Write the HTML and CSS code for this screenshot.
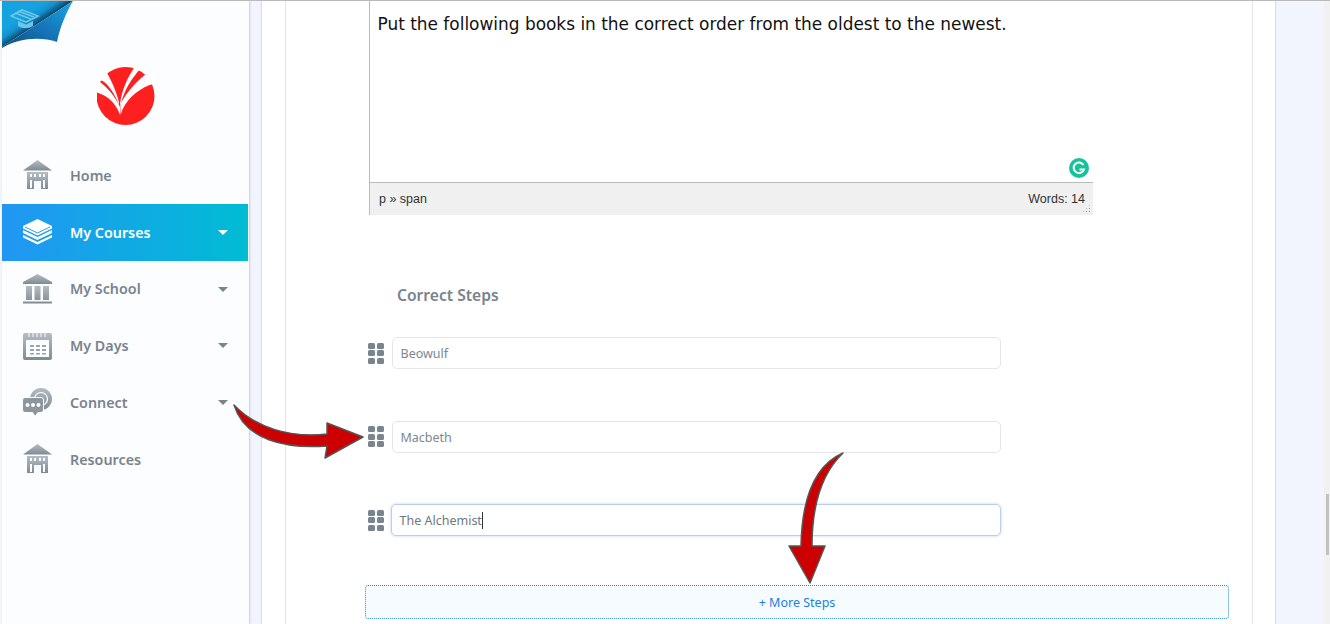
FILE: index.html
```html
<!DOCTYPE html>
<html lang="en">
<head>
    <meta charset="UTF-8">
    <title>My Courses</title>
    <link rel="stylesheet" href="styles.css">
</head>
<body>
    <svg width="0" height="0" class="defs">
        <defs>
            <linearGradient id="grey" x1="0" y1="0" x2="0" y2="1">
                <stop offset="0" stop-color="#b4bdc4"/>
                <stop offset="1" stop-color="#808a93"/>
            </linearGradient>
            <linearGradient id="curl" gradientUnits="userSpaceOnUse" x1="27" y1="11" x2="35" y2="23">
                <stop offset="0" stop-color="#14a3de"/>
                <stop offset="0.5" stop-color="#1590cc"/>
                <stop offset="1" stop-color="#0b4a70"/>
            </linearGradient>
            <linearGradient id="fold" x1="0" y1="1" x2="1" y2="0">
                <stop offset="0" stop-color="#0b4f78"/>
                <stop offset="0.45" stop-color="#1570b5"/>
                <stop offset="1" stop-color="#17a6e0"/>
            </linearGradient>
        </defs>
    </svg>

    <aside class="sidebar">
        <svg class="curl" width="72" height="48" viewBox="0 0 72 48">
            <path d="M0 0H71L0 46Z" fill="url(#curl)"/>
            <path d="M0 46L71 0C64 12 58 26 55 41C40 36 18 36 0 47Z" fill="url(#fold)"/>
            <g fill="none" stroke="#6cc6ea" stroke-width="1.600">
                <path d="M9 15L20 9L36 15L24 21Z"/>
                <path d="M13 12L29 18M16 10L32 16"/>
            </g>
            <path d="M16 20L24 23.500L31 20V25C26 28 21 28 16 25Z" fill="#6cc6ea"/>
        </svg>
        <div class="logo">
            <svg width="58" height="60" viewBox="0 0 58 60">
                <circle cx="28.500" cy="30" r="29" fill="#fe1f1f"/>
                <path d="M-2 8L9.300 5.700C14 14 19 24 22 36V39C18 28 12 19 5.300 14.700L-2 14Z" fill="#fff"/>
                <path d="M-2 17L2.700 15.700C10 21 18 30 23 41V49C19 37 10 29 -2 26Z" fill="#fff"/>
                <path d="M37.700 0L44 2C35 12 27 24 24 38H23C25 24 30 12 37.700 1Z" fill="#fff"/>
                <path d="M47.700 9L60 6V17L52.700 19C40 24 28 34 23.500 49L23.300 38C30 26 38 17 47.700 9Z" fill="#fff"/>
            </svg>
        </div>
        <nav class="menu">
            <a class="menu-item">
                <svg class="menu-icon" width="29" height="30" viewBox="0 0 29 30">
                    <path d="M14.500 0L29 10.500H0Z" fill="url(#grey)"/>
                    <path fill-rule="evenodd" d="M4 12H25V29H18V21H11V29H4ZM7 14V17H9V14ZM11 14V17H13V14ZM16 14V17H18V14ZM20 14V17H22V14ZM7 20V28H9V20ZM20 20V28H22V20Z" fill="url(#grey)"/>
                </svg>
                <span>Home</span>
            </a>
            <a class="menu-item active">
                <svg class="menu-icon" width="29" height="26" viewBox="0 0 29 26">
                    <path d="M14.500 0L29 7V9.500L14.500 16.500L0 9.500V7Z" fill="#fff"/>
                    <path d="M0 11L14.500 18L29 11V14L14.500 21L0 14Z" fill="#fff"/>
                    <path d="M0 16L14.500 23L29 16V18.500L14.500 25.500L0 18.500Z" fill="#fff"/>
                    <path d="M2 8L14.500 14L27 8" fill="none" stroke="#2a9fe0" stroke-width="1"/>
                </svg>
                <span>My Courses</span>
                <i class="caret"></i>
            </a>
            <a class="menu-item">
                <svg class="menu-icon" width="29" height="30" viewBox="0 0 29 30">
                    <path d="M14.500 0L29 8V10H0V8Z" fill="url(#grey)"/>
                    <path d="M3 12H9V26H3ZM11.500 12H17.500V26H11.500ZM20 12H26V26H20ZM0 27.500H29V29.500H0Z" fill="url(#grey)"/>
                </svg>
                <span>My School</span>
                <i class="caret"></i>
            </a>
            <a class="menu-item">
                <svg class="menu-icon" width="29" height="29" viewBox="0 0 29 29">
                    <path fill-rule="evenodd" d="M2 2H27A2 2 0 0 1 29 4V27A2 2 0 0 1 27 29H2A2 2 0 0 1 0 27V4A2 2 0 0 1 2 2ZM3 9V26H26V9Z" fill="url(#grey)"/>
                    <path d="M6 1V6M10 1V6M14 1V6M18 1V6M22 1V6" stroke="#fff" stroke-width="1"/>
                    <path d="M7 14H11V16H7ZM13 14H17V16H13ZM19 14H23V16H19ZM7 18H11V20H7ZM13 18H17V20H13ZM19 18H23V20H19ZM7 22H11V23.500H7ZM13 22H17V23.500H13ZM19 22H23V23.500H19Z" fill="#9aa4ac"/>
                </svg>
                <span>My Days</span>
                <i class="caret"></i>
            </a>
            <a class="menu-item">
                <svg class="menu-icon" width="29" height="29" viewBox="0 0 29 29">
                    <circle cx="18" cy="11" r="11" fill="url(#grey)"/>
                    <circle cx="18" cy="11" r="6.500" fill="none" stroke="#fff" stroke-width="1.200"/>
                    <path d="M2 9.500H18A2.500 2.500 0 0 1 20.500 12V22A2.500 2.500 0 0 1 18 24.500H15L12 28.500L9.500 24.500H2A2.500 2.500 0 0 1 -0.500 22V12A2.500 2.500 0 0 1 2 9.500Z" fill="#8d979f" stroke="#fff" stroke-width="1"/>
                    <circle cx="4.500" cy="17" r="2" fill="#fff"/>
                    <circle cx="10" cy="17" r="2" fill="#fff"/>
                    <circle cx="15.500" cy="17" r="2" fill="#fff"/>
                </svg>
                <span>Connect</span>
                <i class="caret"></i>
            </a>
            <a class="menu-item">
                <svg class="menu-icon" width="29" height="30" viewBox="0 0 29 30">
                    <path d="M14.500 0L29 10.500H0Z" fill="url(#grey)"/>
                    <path fill-rule="evenodd" d="M4 12H25V29H18V21H11V29H4ZM7 14V17H9V14ZM11 14V17H13V14ZM16 14V17H18V14ZM20 14V17H22V14ZM7 20V28H9V20ZM20 20V28H22V20Z" fill="url(#grey)"/>
                </svg>
                <span>Resources</span>
            </a>
        </nav>
    </aside>

    <main class="main">
        <div class="panel">
            <div class="card">
                <div class="editor">
                    <div class="editor-body">
                        <p>Put the following books in the correct order from the oldest to the newest.</p>
                        <span class="grammarly">
                            <svg width="20" height="20" viewBox="0 0 20 20">
                                <circle cx="10" cy="10" r="10" fill="#15c39a"/>
                                <path d="M14.500 7A5.300 5.300 0 1 0 15 11.500H10.500" fill="none" stroke="#fff" stroke-width="2"/>
                            </svg>
                        </span>
                    </div>
                    <div class="editor-status">
                        <span>p » span</span>
                        <span>Words: 14</span>
                        <i class="resize-grip"></i>
                    </div>
                </div>
                <h3 class="steps-title">Correct Steps</h3>
                <div class="step">
                    <span class="handle"><i></i><i></i><i></i><i></i><i></i><i></i></span>
                    <div class="step-input">Beowulf</div>
                </div>
                <div class="step">
                    <span class="handle"><i></i><i></i><i></i><i></i><i></i><i></i></span>
                    <div class="step-input">Macbeth</div>
                </div>
                <div class="step">
                    <span class="handle"><i></i><i></i><i></i><i></i><i></i><i></i></span>
                    <div class="step-input focused">The Alchemist</div>
                </div>
                <button class="more-steps">+ More Steps</button>
            </div>
        </div>
        <div class="scrollbar"><div class="scroll-thumb"></div></div>
    </main>

    <!-- annotation arrows drawn over the screenshot -->
    <svg class="arrows" width="1330" height="624" viewBox="0 0 1330 624">
        <g fill="#cc0000" stroke="#555" stroke-width="1.500" stroke-linejoin="round">
            <path d="M234 405C256 428 290 438 327 434V423L363 437L325 458L327 446C285 449 245 440 234 405Z"/>
            <path d="M843 453C820 463 802 490 801 546H789L810 583L825 546H812C812 510 820 475 843 453Z"/>
        </g>
    </svg>
</body>
</html>
```

FILE: styles.css
```css
html, body {
    margin: 0;
    height: 624px;
    overflow: hidden;
}
body {
    display: flex;
    position: relative;
    background-color: #f2f4fe;
    border-top: 1px solid #b9b9b9;
    box-sizing: border-box;
    font-family: "Noto Sans", "Open Sans", sans-serif;
    color: #79838e;
}
.defs {
    position: absolute;
}

/* sidebar */
.sidebar {
    width: 247px;
    margin-left: 2px;
    flex-shrink: 0;
    position: relative;
    background-color: #fcfdff;
    box-shadow: 1px 0 2px rgba(120, 130, 170, 0.35);
}
.curl {
    position: absolute;
    left: 0;
    top: 0;
}
.logo {
    display: flex;
    justify-content: flex-start;
    padding: 65px 0 0 95px;
    height: 81px;
}
.menu-item {
    display: flex;
    align-items: center;
    height: 56.750px;
    padding-left: 21px;
    font-size: 14.300px;
    font-weight: 600;
    color: #79838e;
    position: relative;
}
.menu-item span {
    position: absolute;
    left: 68px;
}
.menu-item.active {
    width: 246px;
    box-sizing: border-box;
    color: #fff;
    background: linear-gradient(to right, #2196f3, #00bcd4);
}
.caret {
    position: absolute;
    left: 216px;
    top: 26px;
    border-left: 5px solid transparent;
    border-right: 5px solid transparent;
    border-top: 5px solid #79838e;
}
.active .caret {
    border-top-color: #fff;
}

/* main area */
.main {
    flex: 1;
    display: flex;
    justify-content: space-between;
    padding-left: 13px;
}
.panel {
    width: 1013px;
    background-color: #fff;
    box-shadow: -1px 0 1px rgba(120, 130, 170, 0.2), 1px 0 1px rgba(120, 130, 170, 0.2);
    padding: 0 21px 0 23px;
    box-sizing: border-box;
}
.card {
    height: 100%;
    box-sizing: border-box;
    width: 968px;
    border-left: 1px solid #e4e4e4;
    border-right: 1px solid #e4e4e4;
    padding-left: 79px;
}
.scrollbar {
    width: 6px;
    background-color: #f1f1f1;
    padding-top: 493px;
}
.scroll-thumb {
    width: 3px;
    height: 61px;
    margin-left: 2px;
    background-color: #c1c1c1;
}

/* editor */
.editor {
    width: 724px;
    margin-left: 4px;
    box-sizing: border-box;
    border-left: 1px solid #bbb;
}
.editor-body {
    height: 181px;
    position: relative;
    box-sizing: border-box;
    padding: 11.500px 7.500px;
}
.editor-body p {
    margin: 0;
    font-family: "DejaVu Sans", Verdana, sans-serif;
    font-size: 16.950px;
    line-height: 22px;
    color: #111;
}
.grammarly {
    position: absolute;
    right: 4px;
    bottom: 4px;
    height: 20px;
}
.editor-status {
    height: 33px;
    box-sizing: border-box;
    border-top: 1px solid #bbb;
    background-color: #f0f0f0;
    display: flex;
    align-items: center;
    justify-content: space-between;
    padding: 0 8px 0 9px;
    position: relative;
    font-family: "Liberation Sans", Arial, sans-serif;
    font-size: 12.500px;
    color: #333;
}
.resize-grip {
    position: absolute;
    right: 2px;
    bottom: 2px;
    width: 9px;
    height: 9px;
    background: radial-gradient(#888 40%, transparent 45%) 0 0 / 3px 3px;
    clip-path: polygon(100% 0, 100% 100%, 0 100%);
}

/* steps */
.steps-title {
    margin: 70px 0 32px 32px;
    font-size: 15.600px;
    line-height: 20px;
    font-weight: 600;
    color: #79838e;
}
.step {
    display: flex;
    align-items: center;
    margin: 0 0 51.500px 3px;
}
.handle {
    display: grid;
    grid-template-columns: 7px 7px;
    grid-auto-rows: 6px;
    gap: 1.500px 2px;
    width: 24px;
    flex-shrink: 0;
}
.handle i {
    background-color: #78858f;
    border-radius: 1.500px;
}
.step-input {
    width: 609px;
    height: 32px;
    box-sizing: border-box;
    border: 1px solid #e6e6e6;
    border-radius: 5px;
    padding: 0 7.500px;
    font-size: 12.500px;
    line-height: 32px;
    color: #7d8790;
}
.step-input.focused {
    width: 610px;
    margin-left: -1px;
    border-color: #b9cfe8;
    box-shadow: 0 0 3px rgba(120, 170, 230, 0.5);
    color: #6e7882;
}
.step-input.focused::after {
    content: "";
    border-left: 1px solid #333;
}
.more-steps {
    display: block;
    margin: -2.500px 0 0;
    width: 864px;
    height: 34px;
    box-sizing: border-box;
    border: 1px dotted #2f8fe0;
    border-radius: 3px;
    background-color: #f6fbff;
    color: #1a7fe0;
    font-family: inherit;
    font-size: 12.500px;
}

.arrows {
    position: absolute;
    left: 0;
    top: -1px;
    pointer-events: none;
}
```
